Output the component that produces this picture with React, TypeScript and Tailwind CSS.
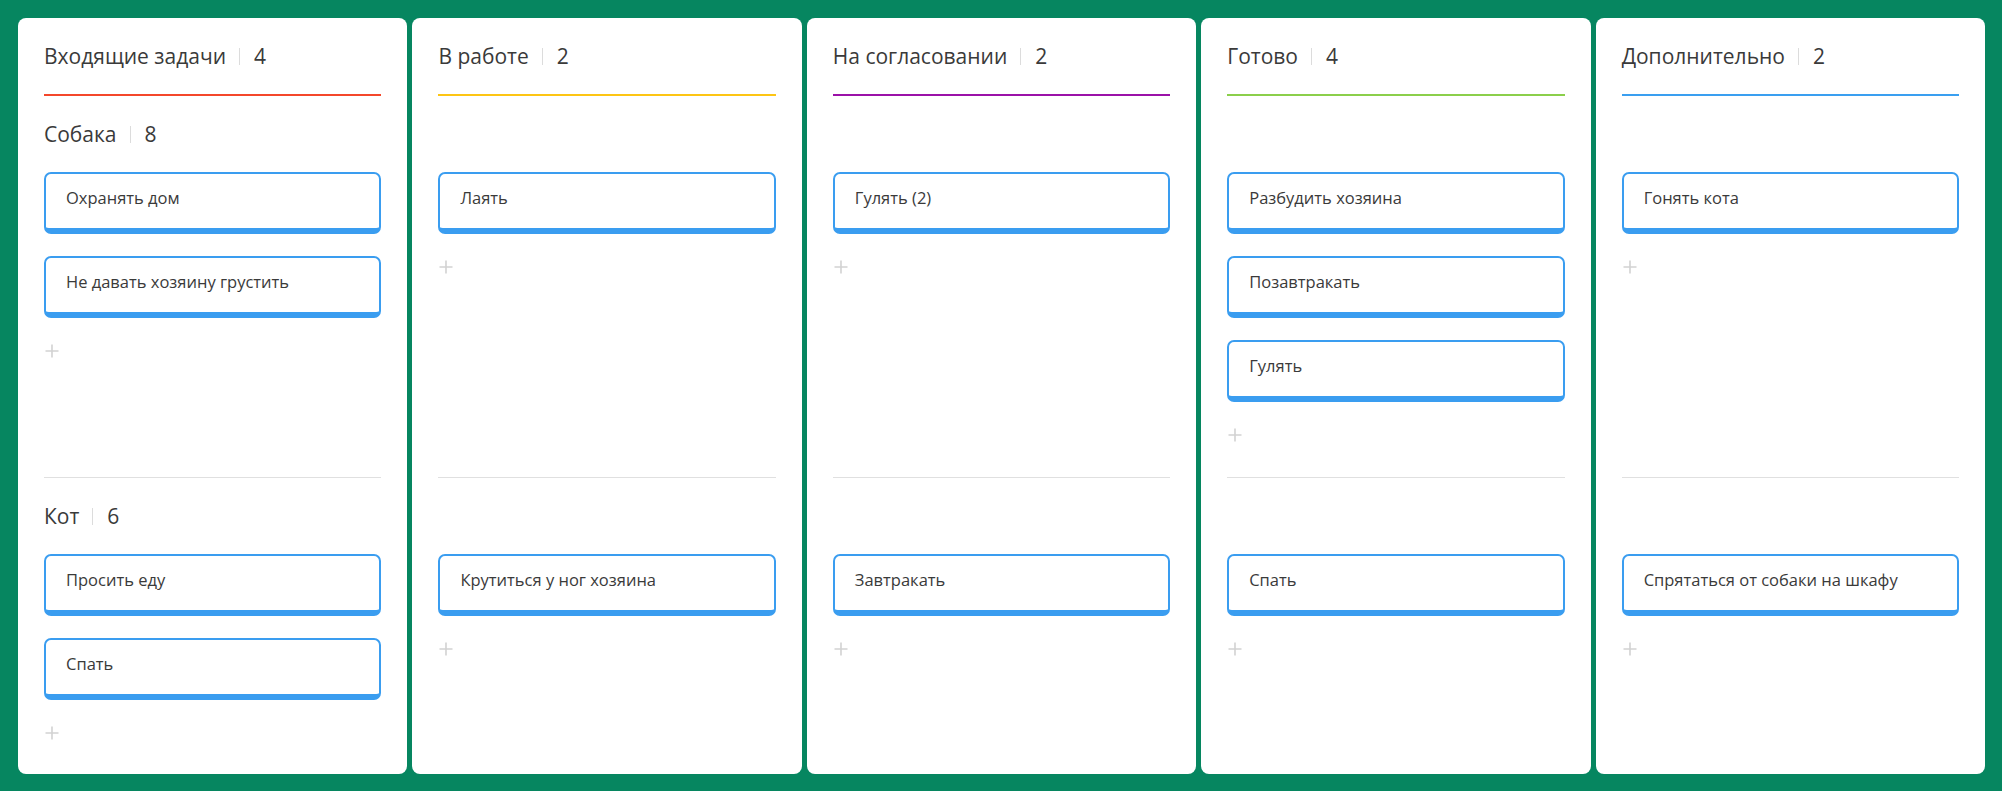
import React from "react";

type Lane = { title?: string; count?: number; cards: string[] };
type Column = { title: string; count: number; color: string; lanes: [Lane, Lane] };

const columns: Column[] = [
  {
    title: "Входящие задачи",
    count: 4,
    color: "bg-[#f4472b]",
    lanes: [
      { title: "Собака", count: 8, cards: ["Охранять дом", "Не давать хозяину грустить"] },
      { title: "Кот", count: 6, cards: ["Просить еду", "Спать"] },
    ],
  },
  {
    title: "В работе",
    count: 2,
    color: "bg-[#fdc514]",
    lanes: [{ cards: ["Лаять"] }, { cards: ["Крутиться у ног хозяина"] }],
  },
  {
    title: "На согласовании",
    count: 2,
    color: "bg-[#9b11a8]",
    lanes: [{ cards: ["Гулять (2)"] }, { cards: ["Завтракать"] }],
  },
  {
    title: "Готово",
    count: 4,
    color: "bg-[#8bcf4b]",
    lanes: [{ cards: ["Разбудить хозяина", "Позавтракать", "Гулять"] }, { cards: ["Спать"] }],
  },
  {
    title: "Дополнительно",
    count: 2,
    color: "bg-[#3a9ff0]",
    lanes: [{ cards: ["Гонять кота"] }, { cards: ["Спрятаться от собаки на шкафу"] }],
  },
];

function Title({ title, count }: { title: string; count: number }) {
  return (
    <div className="flex items-center h-[28px] text-[21px] leading-[28px] text-[#3a3a3a]">
      <span>{title}</span>
      <span className="ml-[13px] mr-[14px] w-px h-[17px] bg-[#dcdcdc]" />
      <span>{count}</span>
    </div>
  );
}

function Plus() {
  return (
    <svg width="14" height="14" viewBox="0 0 14 14" className="ml-px mt-[26px] block">
      <path d="M7 0.5V13.5M0.5 7H13.5" stroke="#d2d2d2" strokeWidth="1.6" />
    </svg>
  );
}

function Card({ text }: { text: string }) {
  return (
    <div className="h-[62px] rounded-[7px] border-2 border-b-[6px] border-[#3a9df0] bg-white px-5 pt-[13px] text-[16.5px] leading-[22px] text-[#3a3a3a] whitespace-nowrap">
      {text}
    </div>
  );
}

function LaneView({ lane }: { lane: Lane }) {
  return (
    <div className="pt-6">
      <div className="h-[28px]">
        {lane.title && lane.count !== undefined ? <Title title={lane.title} count={lane.count} /> : null}
      </div>
      <div className="mt-6 flex flex-col gap-[22px]">
        {lane.cards.map((c) => (
          <Card key={c} text={c} />
        ))}
      </div>
      <Plus />
    </div>
  );
}

export default function App() {
  return (
    <div
      className="flex gap-[5px] bg-[#068660] pl-[18px] pr-[17px] pt-[18px] pb-[17px] h-[791px]"
      style={{ fontFamily: '"Open Sans", "Noto Sans", sans-serif' }}
    >
      {columns.map((col) => (
        <div key={col.title} className="flex-1 min-w-0 rounded-[8px] bg-white px-[26px] flex flex-col">
          <div className="pt-6">
            <Title title={col.title} count={col.count} />
          </div>
          <div className={`mt-6 h-[2px] ${col.color}`} />
          <div className="h-[381px]">
            <LaneView lane={col.lanes[0]} />
          </div>
          <div className="h-px bg-[#e0e0e0]" />
          <LaneView lane={col.lanes[1]} />
        </div>
      ))}
    </div>
  );
}
